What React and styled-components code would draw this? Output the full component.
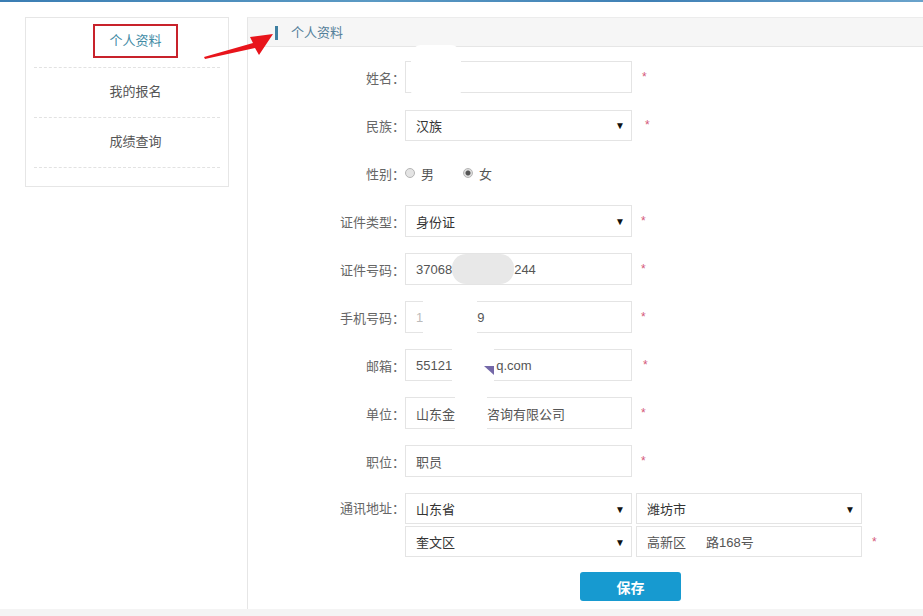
import React from 'react';
import styled, { createGlobalStyle } from 'styled-components';

const GlobalStyle = createGlobalStyle`
  html, body {
    margin: 0;
    padding: 0;
    background: #fff;
    font-family: "Liberation Sans", "Noto Sans CJK SC", sans-serif;
    font-size: 13px;
  }
`;

const Page = styled.div`
  position: relative;
  width: 923px;
  height: 616px;
  overflow: hidden;
  display: flex;
  flex-direction: column;
`;

const TopBar = styled.div`
  height: 2px;
  background: linear-gradient(90deg, #3a7db3 0%, #5b9ac4 40%, #3f80b5 70%, #6aa3cb 100%);
`;

const Body = styled.div`
  display: flex;
  padding-top: 15px;
  height: 607px;
  box-sizing: border-box;
`;

const Sidebar = styled.div`
  width: 247px;
  padding-left: 25px;
  box-sizing: border-box;
`;

const NavBox = styled.div`
  width: 204px;
  border: 1px solid #e6e6e6;
  padding: 0 8px 18px;
  box-sizing: border-box;
`;

const NavItem = styled.div`
  height: 50px;
  border-bottom: 1px dashed #e2e2e2;
  display: flex;
  align-items: center;
  justify-content: center;
  padding: 0 0 4px 17px;
  box-sizing: border-box;
  color: ${(p) => (p.active ? '#3f8ba5' : '#555')};
`;

const Highlight = styled.span`
  display: inline-block;
  border: 2px solid #c8222b;
  padding: 0 14px;
  line-height: 30px;
`;

const Main = styled.div`
  flex: 1;
  height: 592px;
  border-left: 1px solid #e6e6e6;
  border-top: 1px solid #ececec;
  border-bottom: 1px solid #e6e6e6;
  display: flex;
  flex-direction: column;
`;

const Header = styled.div`
  height: 29px;
  background: #f6f6f6;
  border-bottom: 1px solid #e6e6e6;
  display: flex;
  align-items: center;
  padding: 1px 0 0 27px;
  box-sizing: border-box;
`;

const Title = styled.span`
  border-left: 3px solid #3e7fa1;
  padding-left: 13px;
  line-height: 14px;
  color: #54809a;
`;

const Form = styled.div`
  display: flex;
  flex-direction: column;
  gap: 16px;
  padding-top: 14px;
`;

const Row = styled.div`
  position: relative;
  display: flex;
  align-items: ${(p) => (p.top ? 'flex-start' : 'center')};
  min-height: ${(p) => p.h || 32}px;
  margin-top: ${(p) => p.mt || 0}px;
`;

const Label = styled.div`
  width: 157px;
  text-align: right;
  color: #666;
  line-height: ${(p) => (p.top ? '31px' : 'normal')};
`;

const Field = styled.div`
  position: relative;
  width: ${(p) => p.w || 227}px;
  height: ${(p) => p.h || 32}px;
  border: 1px solid #e4e4e4;
  box-sizing: border-box;
  padding-left: 10px;
  display: flex;
  align-items: center;
  color: ${(p) => (p.dark ? '#333' : '#555')};
  background: #fff;
  white-space: nowrap;
`;

const Arrow = styled.span`
  position: absolute;
  right: 6px;
  top: 50%;
  transform: translateY(-50%);
  font-size: 10px;
  color: #111;
`;

const Required = styled.span`
  margin-left: ${(p) => p.m || 9}px;
  color: #d4587a;
  font-size: 12px;
`;

const Gap = styled.span`
  display: inline-block;
  width: ${(p) => p.w}px;
  height: ${(p) => p.h || 32}px;
  background: ${(p) => p.bg || '#fff'};
  border-radius: ${(p) => p.r || 0}px;
`;

const Blob = styled.div`
  position: absolute;
  left: ${(p) => p.x}px;
  top: ${(p) => p.y}px;
  width: ${(p) => p.w}px;
  height: ${(p) => p.h}px;
  background: #fff;
  border-radius: 10px;
`;

const RadioGroup = styled.div`
  display: flex;
  align-items: center;
  color: #555;
`;

const RadioOption = styled.label`
  display: flex;
  align-items: center;
  gap: 6px;
  margin-right: ${(p) => p.m || 0}px;
`;

const RadioDot = styled.span`
  width: 10px;
  height: 10px;
  border-radius: 50%;
  border: 1px solid #b5b5b5;
  background: ${(p) => (p.checked ? 'radial-gradient(circle, #555 0 2px, #ddd 3px)' : '#e4e4e4')};
  box-sizing: border-box;
`;

const AddressGrid = styled.div`
  display: grid;
  grid-template-columns: 227px 226px auto;
  column-gap: 4px;
  row-gap: 2px;
  align-items: center;
`;

const SaveButton = styled.button`
  margin-left: 332px;
  width: 101px;
  height: 29px;
  border: none;
  border-radius: 3px;
  background: #179ad0;
  color: #fff;
  font-family: inherit;
  font-size: 14px;
  font-weight: bold;
`;

const BottomStrip = styled.div`
  flex: 1;
  background: #f4f4f4;
`;

const Overlay = styled.svg`
  position: absolute;
  left: 0;
  top: 0;
  pointer-events: none;
`;

const Tri = styled.span`
  display: inline-block;
  width: 0;
  height: 0;
  border-left: 10px solid transparent;
  border-top: 9px solid #7468a8;
  margin: 10px 2px 0 -10px;
`;

function Select({ value, w, h }) {
  return (
    <Field w={w} h={h} dark>
      {value}
      <Arrow>▼</Arrow>
    </Field>
  );
}

export default function App() {
  return (
    <Page>
      <GlobalStyle />
      <TopBar />
      <Body>
        <Sidebar>
          <NavBox>
            <NavItem active>
              <Highlight>个人资料</Highlight>
            </NavItem>
            <NavItem>我的报名</NavItem>
            <NavItem>成绩查询</NavItem>
          </NavBox>
        </Sidebar>
        <Main>
          <Header>
            <Title>个人资料</Title>
          </Header>
          <Form>
            <Row>
              <Label>姓名：</Label>
              <Field />
              <Required m={10}>*</Required>
              <Blob x={163} y={-16} w={50} h={56} />
            </Row>
            <Row>
              <Label>民族：</Label>
              <Select value="汉族" h={31} />
              <Required m={13}>*</Required>
            </Row>
            <Row>
              <Label>性别：</Label>
              <RadioGroup>
                <RadioOption m={29}>
                  <RadioDot />男
                </RadioOption>
                <RadioOption>
                  <RadioDot checked />女
                </RadioOption>
              </RadioGroup>
            </Row>
            <Row>
              <Label>证件类型：</Label>
              <Select value="身份证" />
              <Required>*</Required>
            </Row>
            <Row>
              <Label>证件号码：</Label>
              <Field>
                37068
                <Gap w={62} h={30} bg="#e8e8e8" r={14} />
                244
              </Field>
              <Required>*</Required>
            </Row>
            <Row>
              <Label>手机号码：</Label>
              <Field>
                <span style={{ color: '#bbb' }}>1</span>
                <Gap w={54} />
                9
              </Field>
              <Required>*</Required>
            </Row>
            <Row>
              <Label>邮箱：</Label>
              <Field>
                55121
                <Gap w={42} />
                <Tri />
                q.com
              </Field>
              <Required m={11}>*</Required>
            </Row>
            <Row>
              <Label>单位：</Label>
              <Field>
                山东金
                <Gap w={32} />
                咨询有限公司
              </Field>
              <Required>*</Required>
            </Row>
            <Row>
              <Label>职位：</Label>
              <Field>职员</Field>
              <Required>*</Required>
            </Row>
            <Row top>
              <Label top>通讯地址：</Label>
              <AddressGrid>
                <Select value="山东省" h={31} />
                <Select value="潍坊市" w={226} h={31} />
                <span />
                <Select value="奎文区" h={31} />
                <Field w={226} h={31}>
                  高新区
                  <Gap w={20} h={29} />
                  路168号
                </Field>
                <Required m={6}>*</Required>
              </AddressGrid>
            </Row>
            <Row h={29} mt={-1}>
              <SaveButton>保存</SaveButton>
            </Row>
          </Form>
        </Main>
      </Body>
      <BottomStrip />
      <Overlay width="923" height="616" viewBox="0 0 923 616">
        <polygon
          points="204,57 253,43 250,37 273,34 259,55 255,48 205,59"
          fill="#e8141b"
        />
      </Overlay>
    </Page>
  );
}
